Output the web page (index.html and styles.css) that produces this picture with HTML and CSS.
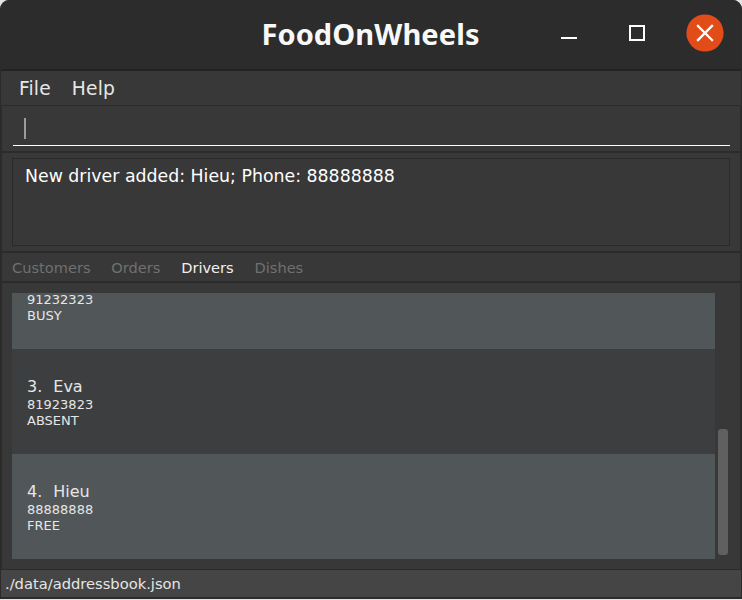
FILE: index.html
```html
<!DOCTYPE html>
<html lang="en">
<head>
<meta charset="utf-8">
<title>FoodOnWheels</title>
<link rel="stylesheet" href="styles.css">
</head>
<body>
<div class="window">
  <header class="titlebar">
    <h1 class="title"><span>FoodOnWheels</span></h1>
    <div class="controls">
      <svg class="control" viewBox="0 0 38 38"><path d="M11 23h16v2H11z" fill="#fff"/></svg>
      <svg class="control" viewBox="0 0 38 38"><path d="M12 12h14v14H12z" fill="none" stroke="#fff" stroke-width="2"/></svg>
      <svg class="control" viewBox="0 0 38 38"><circle cx="19" cy="19" r="18.6" fill="#e14c18"/><path d="M12 12l14 14M26 12L12 26" stroke="#fff" stroke-width="2.3" stroke-linecap="square"/></svg>
    </div>
  </header>
  <nav class="menu"><span>File</span><span>Help</span></nav>
  <main class="panes">
    <section class="command"><div class="field"><i class="caret"></i></div></section>
    <section class="result"><div class="message"><span>New driver added: Hieu; Phone: 88888888</span></div></section>
    <nav class="tabs"><span>Customers</span><span>Orders</span><span class="active">Drivers</span><span>Dishes</span></nav>
    <section class="list">
      <div class="cards">
        <article class="card even clipped"><p>91232323</p><p>BUSY</p></article>
        <article class="card"><h2><span>3.</span><span>Eva</span></h2><p>81923823</p><p>ABSENT</p></article>
        <article class="card even"><h2><span>4.</span><span>Hieu</span></h2><p>88888888</p><p>FREE</p></article>
      </div>
      <div class="track"><div class="thumb"></div></div>
    </section>
  </main>
  <footer class="status"><span>./data/addressbook.json</span></footer>
</div>
</body>
</html>
```
FILE: styles.css
```css
* { box-sizing: border-box; margin: 0; padding: 0; }
body {
  width: 742px;
  height: 600px;
  overflow: hidden;
  background: #e4e4e4;
  font-family: "DejaVu Sans", sans-serif;
  color: #e6e6e6;
}
.window {
  height: 599px;
  display: flex;
  flex-direction: column;
  border: solid #2b2b2b;
  border-width: 0 1px 2px;
  border-radius: 9px 9px 0 0;
  background: #383838;
  overflow: hidden;
}
.titlebar {
  height: 71px;
  display: grid;
  grid-template-columns: 1fr auto 1fr;
  align-items: start;
  background: #2c2c2c;
  border-bottom: 2px solid #242424;
}
.title {
  grid-column: 2;
  font: bold 29px/67px "Noto Sans", sans-serif;
  letter-spacing: 0.1px;
  margin-right: 1px;
  color: #f8f8f8;
}
.controls { display: flex; justify-content: flex-end; gap: 30px; padding: 14px 17px 0 0; }
.control { width: 38px; height: 38px; }
.menu {
  height: 34px;
  display: flex;
  gap: 21px;
  padding-left: 18px;
  font-size: 18.67px;
  letter-spacing: 0.15px;
  line-height: 36px;
}
.panes {
  flex: 1;
  display: flex;
  flex-direction: column;
  border: 1px solid #2b2b2b;
}
.command { height: 47px; padding: 11px 10px 0 11px; border-bottom: 2px solid #2b2b2b; }
.field { height: 29px; border-bottom: 1px solid #fff; padding: 1px 0 0 11px; }
.caret { display: block; width: 2px; height: 21px; background: #9b9b9b; }
.result { height: 100px; padding: 5px 10px; border-bottom: 2px solid #2b2b2b; }
.message {
  height: 88px;
  padding: 7px 12px;
  border: 1px solid #2a2a2a;
  font-size: 17.35px;
  line-height: 20px;
  color: #fff;
}
.tabs {
  height: 30px;
  display: flex;
  gap: 20.8px;
  padding-left: 10px;
  border-bottom: 2px solid #2b2b2b;
  font-size: 14.6px;
  line-height: 29px;
  color: #707070;
}
.active { color: #f0f0f0; }
.list { flex: 1; display: flex; padding: 10px 12px 10px 10px; }
.cards { width: 703px; }
.card { height: 105px; padding: 28px 15px 0; background: #3c3e3f; }
.card.even { background: #515658; }
.card.clipped { height: 56px; padding-top: 0; }
.card.clipped p:first-child { line-height: 14px; margin-bottom: 1px; }
.card h2 { display: flex; gap: 11px; font-size: 16px; font-weight: normal; line-height: 20px; height: 20px; }
.card p { font-size: 13px; line-height: 16px; }
.track { flex: 1; padding: 136px 0 0 3px; }
.thumb { width: 10px; height: 126px; border-radius: 3px; background: #606060; }
.status { height: 27px; padding-left: 4px; background: #454545; font-size: 14.7px; line-height: 27px; }
```
